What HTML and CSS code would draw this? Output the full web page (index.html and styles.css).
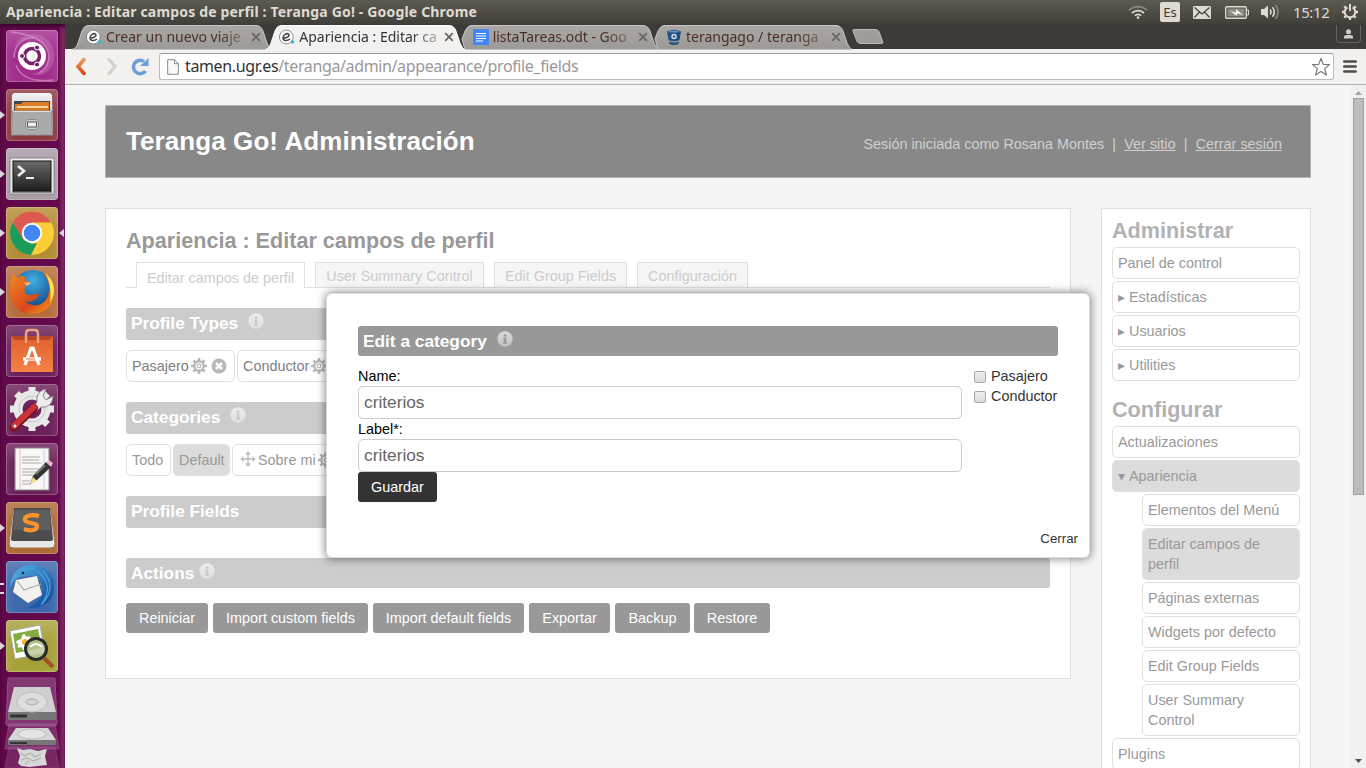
FILE: index.html
```html
<!DOCTYPE html>
<html lang="es">
<head>
<meta charset="utf-8">
<title>Apariencia : Editar campos de perfil : Teranga Go!</title>
<link rel="stylesheet" href="styles.css">
</head>
<body>
<svg class="defs" width="0" height="0">
  <defs>
    <linearGradient id="metal" x1="0" y1="0" x2="0" y2="1"><stop offset="0" stop-color="#f4f4f4"/><stop offset="1" stop-color="#a9a9a9"/></linearGradient>
    <linearGradient id="dark" x1="0" y1="0" x2="0" y2="1"><stop offset="0" stop-color="#6a6a6a"/><stop offset="1" stop-color="#1e1e1e"/></linearGradient>
    <linearGradient id="bag" x1="0" y1="0" x2="0" y2="1"><stop offset="0" stop-color="#e0602c"/><stop offset="1" stop-color="#f58247"/></linearGradient>
    <linearGradient id="info" x1="0" y1="0" x2="0" y2="1"><stop offset="0" stop-color="#dcdcdc"/><stop offset="1" stop-color="#c0c0c0"/></linearGradient>
    <linearGradient id="infopale" x1="0" y1="0" x2="0" y2="1"><stop offset="0" stop-color="#ededed"/><stop offset="1" stop-color="#dfdfdf"/></linearGradient>
    <linearGradient id="tabfill" x1="0" y1="0" x2="0" y2="1"><stop offset="0" stop-color="#aaa8a5"/><stop offset="1" stop-color="#9b9a97"/></linearGradient>
    <radialGradient id="globe" cx=".5" cy=".25" r=".7"><stop offset="0" stop-color="#3eb0e4"/><stop offset="1" stop-color="#123f7e"/></radialGradient>
    <linearGradient id="fox" x1="0" y1="0" x2="1" y2="1"><stop offset="0" stop-color="#f08a24"/><stop offset=".6" stop-color="#d9481c"/><stop offset="1" stop-color="#f6a21c"/></linearGradient>
    <linearGradient id="bird" x1="0" y1="0" x2="1" y2="1"><stop offset="0" stop-color="#58b4ec"/><stop offset="1" stop-color="#0b3f92"/></linearGradient>
    <linearGradient id="back" x1="0" y1="0" x2="0" y2="1"><stop offset="0" stop-color="#ef9a5a"/><stop offset="1" stop-color="#d8481a"/></linearGradient>
    <symbol id="i-info" viewBox="0 0 16 16"><circle cx="8" cy="8" r="7.700" fill="url(#info)"/><path d="M6.800 3.500h2.600v2H6.800zM6.300 6.600h3v5h.8v1.200H6v-1.200h.8V7.800h-.5z" fill="#999"/></symbol>
    <symbol id="i-info-pale" viewBox="0 0 16 16"><circle cx="8" cy="8" r="7.700" fill="url(#infopale)"/><path d="M6.800 3.500h2.600v2H6.800zM6.300 6.600h3v5h.8v1.200H6v-1.200h.8V7.800h-.5z" fill="#c8c8c8"/></symbol>
    <symbol id="i-gear" viewBox="0 0 16 16"><g stroke="#b8b8b8" fill="none"><circle cx="8" cy="8" r="4.700" stroke-width="2.400"/><path d="M8 0v3M8 13v3M0 8h3M13 8h3M2.400 2.400l2 2M11.600 11.600l2 2M2.400 13.600l2-2M11.600 4.400l2-2" stroke-width="2.600"/><circle cx="8" cy="8" r="1.800" stroke-width="1.200"/></g></symbol>
    <symbol id="i-del" viewBox="0 0 16 16"><circle cx="8" cy="8" r="7.500" fill="#b8b8b8"/><path d="M5 5l6 6M11 5l-6 6" stroke="#fff" stroke-width="2.600"/></symbol>
    <symbol id="i-move" viewBox="0 0 16 16"><path d="M8 2v12M2 8h12" stroke="#bbb" stroke-width="1.300"/><path d="M5 3.500L8 .3l3 3.200zM5 12.500l3 3.200 3-3.200zM3.500 5L.3 8l3.200 3zM12.500 5l3.200 3-3.200 3z" fill="#bbb"/></symbol>
    <symbol id="i-x" viewBox="0 0 10 10"><path d="M1.200 1.200l7.600 7.600M8.800 1.200L1.200 8.800" stroke="#6b6360" stroke-width="1.700"/></symbol>
    <symbol id="i-elgg" viewBox="0 0 16 16"><circle cx="7.300" cy="8" r="6.900" fill="#fafafa" stroke="#777" stroke-width=".8"/><path d="M4.300 8.900C8 9 11 7 9.600 5.200 8 3.600 4 6 4 9c.2 3 4 3.400 7 1" fill="none" stroke="#444" stroke-width="1.500"/><circle cx="13.500" cy="13" r="1.700" fill="#35b6dc"/></symbol>
  </defs>
</svg>
<div class="desktop">
  <header class="topbar">
    <span class="window-title">Apariencia : Editar campos de perfil : Teranga Go! - Google Chrome</span>
    <div class="tray">
      <svg class="wifi" width="20" height="14" viewBox="0 0 20 14" fill="none" stroke-width="1.700"><path d="M1 5.200a13 13 0 0 1 18 0" stroke="#8b887f"/><path d="M4 8a9 9 0 0 1 12 0M6.800 10.600a5 5 0 0 1 6.400 0" stroke="#dfdbd2"/><circle cx="10" cy="12.600" r="1.300" fill="#dfdbd2"/></svg>
      <span class="lang">Es</span>
      <svg class="mail" width="18" height="13" viewBox="0 0 18 13"><rect width="18" height="13" rx="1" fill="#dfdbd2"/><path d="M1.500 1.500L9 8l7.500-6.500M1.500 11.500L6.500 6M16.500 11.500l-5-5.500" fill="none" stroke="#44433d" stroke-width="1.200"/></svg>
      <svg class="battery" width="24" height="13" viewBox="0 0 24 13"><rect x=".7" y=".7" width="20.600" height="11.600" rx="1" fill="none" stroke="#dfdbd2" stroke-width="1.400"/><rect x="2.500" y="2.500" width="17" height="8" fill="#8f8c83"/><path d="M22 4h1.500v5H22" stroke="#dfdbd2" fill="none"/><path d="M5 5l6 1.600V3l7 6-6-1.500V10z" fill="#f4f1e9"/></svg>
      <svg class="sound" width="20" height="16" viewBox="0 0 20 16"><path d="M0 5h3l4-3.500v13L3 11H0z" fill="#dfdbd2"/><g fill="none" stroke-width="1.600"><path d="M9 5.500a4 4 0 0 1 0 5M11.500 3.300a7 7 0 0 1 0 9.400" stroke="#dfdbd2"/><path d="M14.500 1a11 11 0 0 1 0 14" stroke="#8b887f"/></g></svg>
      <span class="clock">15:12</span>
      <svg class="cog" width="18" height="18" viewBox="0 0 18 18" fill="none" stroke="#dfdbd2"><path d="M6.500 4.300a5.300 5.300 0 1 0 5 0" stroke-width="2"/><path d="M9 1v7" stroke-width="2"/><path d="M9 14v3M1 9h3M14 9h3M3.300 3.300l1.800 1.800M14.700 3.300l-1.800 1.800M3.300 14.700l1.800-1.800M14.700 14.700l-1.800-1.800" stroke-width="2.300"/></svg>
    </div>
  </header>
  <div class="workspace">
    <nav class="launcher">
      <div class="tile dash"><svg viewBox="0 0 52 52"><g fill="none" stroke="#dca6d2" opacity=".6"><path d="M5 2c14 2 32 5 37 19 3 10-2 18-9 22M8 28C8 13 18 7 28 8M47 50C30 52 15 49 10 35" stroke-width="1.500"/></g><path d="M6 20C13 3 36 6 42 20c4 11-5 24-17 24 15 5 27-8 22-26C40 0 15-2 6 20z" fill="#d68fcb" opacity=".35"/><circle cx="26" cy="26" r="14" fill="#fff"/><circle cx="26" cy="26" r="7.500" fill="none" stroke="#74206a" stroke-width="3.500"/><g fill="#74206a" stroke="#fff" stroke-width="1"><circle cx="16" cy="26" r="2.500"/><circle cx="31" cy="17.500" r="2.500"/><circle cx="31" cy="34.500" r="2.500"/></g></svg></div>
      <div class="tile files run"><svg viewBox="0 0 52 52"><path d="M6 6q1-2 3-2h34q2 0 3 2l1 37H5z" fill="url(#metal)"/><path d="M8 12h36v12H8z" fill="#464646"/><path d="M9 15h6l2-2h26v9H9z" fill="#dc7d29"/><path d="M11 17h31v5H11z" fill="#f4d5a4"/><path d="M9 19h34v4H9z" fill="#d6791f"/><path d="M6.500 22h39l1 24h-41z" fill="#aaa" stroke="#919191"/><path d="M7 22.500h38" stroke="#ddd"/><rect x="19.500" y="30.500" width="13" height="10" rx="3" fill="#ccc" stroke="#888"/><rect x="21.500" y="33" width="9" height="5" fill="#eee" stroke="#555"/></svg></div>
      <div class="tile term run"><svg viewBox="0 0 52 52"><path d="M4 10h44v36H4z" fill="#eee" stroke="#888"/><path d="M6 44h40" stroke="#888" stroke-width="2"/><rect x="7" y="13" width="38" height="30" fill="url(#dark)" stroke="#111"/><path d="M12 18l6 5-6 5" fill="none" stroke="#eee" stroke-width="2.600"/><path d="M20 30h8" stroke="#eee" stroke-width="2"/></svg></div>
      <div class="tile chrome run active"><svg viewBox="0 0 52 52"><circle cx="26" cy="26" r="22" fill="#fbce38"/><path d="M6.700 15.500A22 22 0 0 1 45 15.500H26L16 32z" fill="#dc5a50"/><path d="M6.700 15.500L17 32l9 5 5-1-6 12A22 22 0 0 1 6.700 15.500z" fill="#1c9b5b"/><circle cx="26" cy="26" r="10.200" fill="#fff"/><circle cx="26" cy="26" r="8.300" fill="#4285f4"/></svg></div>
      <div class="tile firefox run"><svg viewBox="0 0 52 52"><circle cx="27" cy="25" r="21" fill="url(#globe)"/><path d="M5 15c0-4 2-6 3-8l2 5c3-2 7-3 9-1l0 4 5 0-3 4c-4 3-3 9 2 10 4 1 7-3 10-1-2 6-8 9-14 7 8 8 20 4 23-5 3-10 0-18-6-24 8 4 13 11 12 22C47 41 37 48 26 48 12 48 3 37 4 24c0-3 0-6 1-9z" fill="url(#fox)"/><path d="M39 7c8 6 11 15 8 24l-3 6c1-8 1-20-5-30z" fill="#ffe245"/><path d="M18 17c2-1 5-1 7 0l-4 3z" fill="#f7bb80"/></svg></div>
      <div class="tile store"><svg viewBox="0 0 52 52"><path d="M5 11h42v36H5z" fill="url(#bag)"/><path d="M5 11h42l-4 4H9z" fill="#b94625"/><path d="M20 18V9q0-4 3-4h6q3 0 3 4v9" fill="none" stroke="#eba184" stroke-width="2.500"/><path d="M19 40l6-17h2l6 17" fill="none" stroke="#fff" stroke-width="3.200"/><path d="M17 34h18" stroke="#fff" stroke-width="3.400"/><path d="M20 34h9" stroke="#f17439"/></svg></div>
      <div class="tile settings"><svg viewBox="0 0 52 52"><g fill="none" stroke="#e8e8e8"><circle cx="26" cy="25" r="14" stroke-width="9"/><path d="M26 3v8M26 39v8M4 25h8M40 25h8M10.500 9.500l6 6M35.500 34.500l6 6M10.500 40.500l6-6M35.500 15.500l6-6" stroke-width="7"/></g><circle cx="26" cy="25" r="13" fill="none" stroke="#c8c8c8"/><path d="M31 18c-1-7 3-12 9-13l-3 7 3 4 7-4c0 8-6 12-12 11l-4 4-4-4z" fill="#eee" stroke="#888"/><path d="M8 43l20-19" stroke="#7c1018" stroke-width="8" stroke-linecap="round"/><path d="M8 42l20-19" stroke="#c9333a" stroke-width="6" stroke-linecap="round"/><circle cx="9" cy="42" r="1.500" fill="#fff"/></svg></div>
      <div class="tile editor"><svg viewBox="0 0 52 52"><path d="M9 5h34v42H9z" fill="#f7f7f5" stroke="#888"/><path d="M14 6v40" stroke="#f3bcbc"/><path d="M38 6v40" stroke="#c4d0ef"/><path d="M16 14h18M16 17h17M16 20h19M16 26h18M16 29h17M16 32h12M16 38h8M16 41h9" stroke="#aaa"/><path d="M24 41l3-8 13-14 5 5-14 13z" fill="#333"/><path d="M40 19l3-2 4 3-2 4z" fill="#efb1cc"/><path d="M24 41l3-7 4 4z" fill="#f5d98f"/><path d="M30 31l9-9" stroke="#777" stroke-width="2"/></svg></div>
      <div class="tile sublime run"><svg viewBox="0 0 52 52"><path d="M7 8h38l4 34q0 4-4 4H7q-4 0-4-4z" fill="#e8e8e8" stroke="#a46f49"/><path d="M8 6h36l3 31q0 2-3 2H8q-3 0-3-2z" fill="#4c4c4c"/><path d="M9 8h34l2 20H7z" fill="#6d6d6d" opacity=".6"/><path d="M33 14c-8-2-15 0-14 4 1 4 13 2 12 7-1 4-8 4-13 2" fill="none" stroke="#ff942d" stroke-width="4.200"/></svg></div>
      <div class="tile mailer run two"><svg viewBox="0 0 52 52"><path d="M4 27C4 10 17 3 27 4c12 0 21 9 21 22 0 15-13 23-29 21 12-4 19-11 18-21-2-8-9-12-17-11-6 0-12 2-16 12z" fill="url(#bird)"/><path d="M10 19L31 15l5 19-14 8L7 31z" fill="#f2f1ed"/><path d="M11 20l7 9 17-6" fill="none" stroke="#aaa" stroke-width="1.200"/><path d="M31 10c12 9 14 21 4 34M37 10c10 10 9 23-1 33M14 11c5-4 9-4 13-3" fill="none" stroke="#4ca0dc" stroke-width="1.200"/><circle cx="17" cy="12" r="1.300" fill="#123"/></svg></div>
      <div class="tile viewer run"><svg viewBox="0 0 52 52"><path d="M4 11l30-6 5 28-30 6z" fill="#fff" stroke="#aaa"/><path d="M7 14l25-5 4 19-26 5z" fill="#86ab42"/><g fill="#fff"><ellipse cx="18" cy="22" rx="8" ry="3"/><ellipse cx="18" cy="22" rx="3" ry="8"/><ellipse cx="18" cy="22" rx="3" ry="8" transform="rotate(50 18 22)"/></g><circle cx="19" cy="22" r="3" fill="#f0b626"/><circle cx="30" cy="29" r="10.500" fill="#b9c795" fill-opacity=".8" stroke="#292b29" stroke-width="3"/><path d="M24 27q6-6 12 0" stroke="#fff" stroke-width="2" fill="none"/><path d="M38 38l9 9" stroke="#9a5427" stroke-width="4"/></svg></div>
      <div class="stack">
        <svg viewBox="0 0 56 92"><path d="M4 1h47l2 45q0 3-3 3H5q-3 0-3-3z" fill="#a36598" opacity=".5" stroke="#c29abb"/><path d="M10 10h36l6 25v5H4v-5z" fill="#d0d0d0"/><path d="M4 35h48v7q0 1-2 1H6q-2 0-2-1z" fill="#777"/><path d="M6 39h17" stroke="#333" stroke-width="3"/><ellipse cx="28" cy="25" rx="15" ry="10" fill="#dedede" stroke="#bbb"/><ellipse cx="28" cy="25" rx="6" ry="3" fill="#d2d2d2" stroke="#aaa"/><path d="M5 47h46l4 25H1z" fill="#a36598" opacity=".4" stroke="#c29abb"/><path d="M12 51h32l8 12v4H4v-4z" fill="#d6d6d6"/><path d="M4 63h48v5H4z" fill="#777"/><path d="M6 66h17" stroke="#333" stroke-width="2"/><ellipse cx="28" cy="57" rx="14" ry="5" fill="#e4e4e4" stroke="#bbb"/><path d="M5 70h46l4 21H1z" fill="#a36598" opacity=".3" stroke="#c29abb"/><path d="M13 71l6 2 7-1 8 2 9-2-2 7 2 9-9 1-8 1-9-1-3-3 2-7z" fill="#d8d8d8"/><path d="M16 76l5 3 5-3 5 4 6-3M17 83l6-2 6 3 8-3M21 87l4-3" fill="none" stroke="#b0b0b0" stroke-width="1.200"/></svg>
      </div>
    </nav>
    <section class="browser">
      <div class="tabstrip">
        <div class="tab"><svg class="shape" viewBox="0 0 200 25"><path d="M0 24.500C4 23 5 21 6 18L10 6Q12 .5 16 .5H184Q189 .5 191 6L195 18Q197 23 200 24.500" fill="url(#tabfill)" stroke="#c9c7c4"/></svg><svg class="fav"><use href="#i-elgg"/></svg><span class="tab-label">Crear un nuevo viaje</span><svg class="close"><use href="#i-x"/></svg></div>
        <div class="tab current"><svg class="shape" viewBox="0 0 200 25"><path d="M0 25C4 23 5 21 6 18L10 6Q12 .5 16 .5H184Q189 .5 191 6L195 18Q197 23 200 25" fill="#f2f1f0" stroke="#fff"/></svg><svg class="fav"><use href="#i-elgg"/></svg><span class="tab-label">Apariencia : Editar ca</span><svg class="close"><use href="#i-x"/></svg></div>
        <div class="tab"><svg class="shape" viewBox="0 0 200 25"><path d="M6 24.500L3 14 6 6Q9 .5 12 .5H184Q189 .5 191 6L195 18Q197 23 200 24.500" fill="url(#tabfill)" stroke="#c9c7c4"/></svg><svg class="fav" viewBox="0 0 16 16"><rect width="16" height="16" rx="1" fill="#4285f4"/><path d="M3 4.500h10M3 7h10M3 9.500h10M3 12h7" stroke="#fff" stroke-width="1.200"/></svg><span class="tab-label">listaTareas.odt - Goo</span><svg class="close"><use href="#i-x"/></svg></div>
        <div class="tab"><svg class="shape" viewBox="0 0 200 25"><path d="M6 24.500L3 14 6 6Q9 .5 12 .5H184Q189 .5 191 6L195 18Q197 23 200 24.500" fill="url(#tabfill)" stroke="#c9c7c4"/></svg><svg class="fav" viewBox="0 0 16 16"><path d="M1 2.500Q8-1 15 2.500L13.500 11Q8 13.500 2.500 11z" fill="#205081"/><ellipse cx="8" cy="2.500" rx="5" ry="1" fill="#6894bd"/><path d="M3 12.500q5 2 10 0l-.6 2.500q-4.500 2-8.800 0z" fill="#205081"/><circle cx="8" cy="7.500" r="2" fill="#205081" stroke="#dde" stroke-width="1.500"/></svg><span class="tab-label">terangago / teranga</span><svg class="close"><use href="#i-x"/></svg></div>
        <svg class="newtab" width="32" height="15" viewBox="0 0 32 15"><path d="M1 2Q0 .5 3 .5H23q3 0 4 2l4 11q0 1-2 1H9q-3 0-4-2z" fill="#9e9d9a" stroke="#bbb9b6"/></svg>
        <div class="profile"><svg width="11" height="10" viewBox="0 0 11 10"><circle cx="5.500" cy="2.800" r="2.500" fill="#d0cec8"/><path d="M1 9.500V8q0-2 3-2h3q3 0 3 2v1.500z" fill="#d0cec8"/></svg></div>
      </div>
      <div class="toolbar">
        <svg class="nav-back" width="12" height="19" viewBox="0 0 12 19"><path d="M9 2.500L3 9.500 9 16.500" fill="none" stroke="url(#back)" stroke-width="3.600" stroke-linecap="round"/></svg>
        <svg class="nav-fwd" width="12" height="19" viewBox="0 0 12 19"><path d="M3 2.500l6 7-6 7" fill="none" stroke="#d3d1ce" stroke-width="3.200" stroke-linecap="round"/></svg>
        <svg class="nav-reload" width="18" height="19" viewBox="0 0 18 19"><path d="M14.500 14A6.700 6.700 0 1 1 13 4.500" fill="none" stroke="#6ba1d6" stroke-width="3.600"/><path d="M17.500 1v8H9z" fill="#6ba1d6"/></svg>
        <div class="omnibox">
          <svg width="12" height="16" viewBox="0 0 12 16"><path d="M.7.700h6.800l3.800 4v10.600H.7zM7.500.7v4h3.800" fill="#fafafa" stroke="#888"/></svg>
          <span class="url"><b>tamen.ugr.es</b>/teranga/admin/appearance/profile_fields</span>
          <svg class="star" width="20" height="20" viewBox="0 0 20 20"><path d="M10 1.500l2.300 5.900 6.200.2-4.900 4 1.900 6.300L10 14.500l-5.500 3.400 1.900-6.300-4.900-4 6.200-.2z" fill="#fff" stroke="#777" stroke-width="1.200" stroke-linejoin="round"/></svg>
        </div>
        <svg class="menu" width="14" height="13" viewBox="0 0 14 13"><path d="M1.300 1.500h11.400M1.300 6.500h11.400M1.300 11.500h11.400" stroke="#4d4c4a" stroke-width="2.600" stroke-linecap="round"/></svg>
      </div>
      <div class="viewport">
        <div class="page">
          <div class="site-header">
            <h1>Teranga Go! Administración</h1>
            <p class="session"><span class="who">Sesión iniciada como Rosana Montes</span><i>|</i><a>Ver sitio</a><i>|</i><a>Cerrar sesión</a></p>
          </div>
          <div class="columns">
            <main class="panel">
              <h2>Apariencia : Editar campos de perfil</h2>
              <ul class="filters"><li class="w1 selected">Editar campos de perfil</li><li class="w2">User Summary Control</li><li class="w3">Edit Group Fields</li><li class="w4">Configuración</li></ul>
              <h3 class="bar first">Profile Types <svg class="info far"><use href="#i-info-pale"/></svg></h3>
              <div class="chips types"><span class="chip c-pas">Pasajero<svg class="ic"><use href="#i-gear"/></svg><svg class="ic del"><use href="#i-del"/></svg></span><span class="chip c-con">Conductor<svg class="ic"><use href="#i-gear"/></svg><svg class="ic del"><use href="#i-del"/></svg></span></div>
              <h3 class="bar">Categories <svg class="info far"><use href="#i-info-pale"/></svg></h3>
              <div class="chips"><span class="chip c-todo">Todo</span><span class="chip c-def on">Default</span><span class="chip c-sob"><svg class="ic move"><use href="#i-move"/></svg>Sobre mi<svg class="ic"><use href="#i-gear"/></svg></span></div>
              <h3 class="bar">Profile Fields</h3>
              <h3 class="bar actions">Actions <svg class="info"><use href="#i-info-pale"/></svg></h3>
              <div class="buttons"><span class="b1">Reiniciar</span><span class="b2">Import custom fields</span><span class="b3">Import default fields</span><span class="b4">Exportar</span><span class="b5">Backup</span><span class="b6">Restore</span></div>
            </main>
            <aside class="sidebar">
              <h2>Administrar</h2>
              <ul><li>Panel de control</li><li><i>▸</i>Estadísticas</li><li><i>▸</i>Usuarios</li><li><i>▸</i>Utilities</li></ul>
              <h2>Configurar</h2>
              <ul><li>Actualizaciones</li><li class="on"><i>▾</i>Apariencia</li></ul>
              <ul class="sub"><li>Elementos del Menú</li><li class="on">Editar campos de<br>perfil</li><li>Páginas externas</li><li>Widgets por defecto</li><li>Edit Group Fields</li><li>User Summary<br>Control</li></ul>
              <ul><li>Plugins</li></ul>
            </aside>
          </div>
          <div class="modal">
            <h3>Edit a category <svg class="info far"><use href="#i-info"/></svg></h3>
            <div class="form">
              <div class="fields"><label>Name:</label><div class="input">criterios</div><label>Label*:</label><div class="input">criterios</div><span class="save">Guardar</span></div>
              <div class="checks"><label><span class="box"></span>Pasajero</label><label><span class="box"></span>Conductor</label></div>
            </div>
            <span class="dismiss">Cerrar</span>
          </div>
        </div>
        <div class="scrollbar"><svg width="7" height="4" viewBox="0 0 7 4"><path d="M0 4L3.500 0 7 4z" fill="#a3a3a3"/></svg><div class="thumb"></div><svg width="7" height="4" viewBox="0 0 7 4"><path d="M0 0h7L3.500 4z" fill="#505050"/></svg></div>
      </div>
    </section>
  </div>
</div>
</body>
</html>
```
FILE: styles.css
```css
* { box-sizing: border-box; }
body { margin: 0; font-family: "Liberation Sans", Arial, sans-serif; font-size: 14.4px; line-height: 20px; }
h1, h2, h3, p, ul { margin: 0; padding: 0; }
ul { list-style: none; }
i { font-style: normal; }
svg { flex: none; display: block; }
.defs { position: absolute; }
.desktop { width: 1366px; height: 768px; overflow: hidden; display: flex; flex-direction: column; background: #3c3b37; }

/* system bar */
.topbar { height: 24px; flex: none; display: flex; align-items: center; justify-content: space-between; padding: 0 7px 0 6px; background: linear-gradient(#5c5a50, #403f3a); color: #dfdbd2; font-family: "Noto Sans", sans-serif; }
.window-title { font-weight: bold; font-size: 14px; white-space: nowrap; letter-spacing: .17px; }
.tray { display: flex; align-items: center; height: 24px; }
.lang { width: 20px; height: 20px; border-radius: 2px; background: #dfdbd2; color: #3c3b37; font-size: 13px; text-align: center; margin: 0 13px 0 12px; }
.battery { margin-left: 14px; }
.sound { margin-left: 12px; }
.clock { font-size: 15px; margin-left: 12px; width: 37px; letter-spacing: -.4px; white-space: nowrap; }
.cog { margin-left: 11px; }
.workspace { flex: 1; min-height: 0; display: flex; }

/* launcher */
.launcher { width: 65px; flex: none; padding: 6px 0 0 6px; background: linear-gradient(90deg, #600849, #650a4e 90%, #8b3a6e); display: flex; flex-direction: column; gap: 7px; box-shadow: inset 0 3px 3px #42052f; }
.tile { position: relative; width: 52px; height: 52px; flex: none; border-radius: 4px; box-shadow: inset 0 0 0 1px rgba(255,255,255,.22), inset 0 12px 14px rgba(255,255,255,.18); }
.tile > svg { width: 52px; height: 52px; }
.dash { background: #a12d8c; }
.files { background: #8d3941; }
.term { background: #a99aa6; }
.chrome { background: #b38d36; }
.firefox { background: #b56d3e; }
.store, .settings, .editor { background: #6b2059; }
.sublime { background: #ac6935; }
.mailer { background: #3e68ab; }
.viewer { background: #a7a13a; }
.run::before { content: ""; position: absolute; left: -6px; top: 22px; border: 4px solid transparent; border-left: 5px solid #dcd6da; border-right: 0; }
.two::before { top: 22px; width: 4px; height: 7px; border: solid #dcd6da; border-width: 2px 0; }
.active::after { content: ""; position: absolute; right: -6px; top: 22px; border: 4px solid transparent; border-right: 5px solid #dcd6da; border-left: 0; }
.stack { width: 56px; margin: -2px 0 0 -2px; }
.stack svg { width: 56px; height: 92px; }

/* browser frame */
.browser { flex: 1; min-width: 0; display: flex; flex-direction: column; }
.tabstrip { height: 25px; flex: none; display: flex; padding: 1px 0 0 7px; background: #3c3b37; }
.tab { position: relative; width: 200px; height: 24px; margin-right: -6.700px; flex: none; display: flex; align-items: center; padding: 0 11px 0 14px; color: #4a2f26; }
.current { z-index: 2; color: #333; }
.shape { position: absolute; left: 0; top: 0; width: 200px; height: 25px; }
.fav { position: relative; width: 16px; height: 16px; }
.tab-label { position: relative; margin-left: 4px; width: 140px; overflow: hidden; white-space: nowrap; font: 14px/22px "Noto Sans", sans-serif; -webkit-mask-image: linear-gradient(90deg, #000 112px, rgba(0,0,0,.3) 140px); }
.close { position: relative; width: 10px; height: 10px; margin-left: 6px; }
.newtab { margin: 4px 0 0 6.500px; }
.profile { margin: 0 5px 0 auto; width: 25px; height: 18px; border: 1px solid #65635d; border-top: 0; border-radius: 0 0 4px 4px; display: flex; justify-content: center; align-items: center; }
.toolbar { height: 36px; flex: none; display: flex; align-items: center; background: #f2f1f0; border-bottom: 1px solid #b1b0ae; padding: 0 9px 0 10px; }
.nav-fwd { margin-left: 19px; }
.nav-reload { margin-left: 13px; }
.omnibox { margin-left: 10px; width: 1175px; height: 27px; flex: none; border: 1px solid #bbb; border-top-color: #999; border-radius: 3px; background: #fff; display: flex; align-items: center; padding: 0 2px 0 7px; }
.url { flex: 1; margin: -2px 0 0 6px; color: #999; font: 16px/22px "Noto Sans", sans-serif; white-space: nowrap; letter-spacing: -.37px; }
.url b { font-weight: normal; color: #333; }
.menu { margin-left: 9px; }
.viewport { flex: 1; min-height: 0; display: flex; background: #f5f5f5; }
.page { position: relative; width: 1286px; flex: none; overflow: hidden; padding: 20px 40px 0; }
.scrollbar { width: 15px; background: #f0f0f0; display: flex; flex-direction: column; align-items: center; padding: 6px 0 5px; }
.thumb { width: 11px; height: 397px; margin: 3px 0 auto; border: 1px solid #a0a0a0; background: #bcbcbc; }

/* admin page */
.site-header { width: 1206px; height: 73px; border: 1px solid #b4b4b4; background: #888; color: #fff; display: flex; justify-content: space-between; padding: 0 28px 0 20px; }
.site-header h1 { font-size: 26px; line-height: 70px; white-space: nowrap; letter-spacing: .08px; }
.session { line-height: 77px; color: #d0d0d0; white-space: nowrap; }
.session i { margin: 0 8.200px; }
.session a { text-decoration: underline; }
.columns { display: flex; margin-top: 30px; gap: 30px; width: 1206px; align-items: flex-start; }
.panel { width: 966px; height: 471px; border: 1px solid #e0e0e0; background: #fff; padding: 19px 20px; }
.panel h2, .sidebar h2 { font-size: 21.6px; line-height: 26px; white-space: nowrap; }
.panel h2 { color: #999; }
.filters { display: flex; gap: 10px; height: 26px; margin-top: 8px; padding-left: 10px; border-bottom: 1px solid #e0e0e0; color: #ccc; }
.filters li { border: 1px solid #e0e0e0; border-bottom: 0; background: #f6f6f6; height: 25px; line-height: 26px; text-align: center; white-space: nowrap; }
.filters .selected { background: #fff; height: 26px; line-height: 31px; }
.w1 { width: 169px; } .w2 { width: 169px; } .w3 { width: 133px; } .w4 { width: 111px; }
.bar { height: 32px; margin: 20px 0 0; border-radius: 3px; background: #ccc; color: #fff; font-size: 17.280px; line-height: 31px; padding-left: 5px; display: flex; }
.info { width: 16px; height: 16px; margin: 5px 0 0 5px; }
.info.far { margin-left: 10px; }
.bar.actions { height: 30px; line-height: 31px; margin-top: 30px; }
.chips { display: flex; gap: 2px; margin-top: 10px; color: #999; }
.types { color: #808080; }
.chip { height: 32px; border: 1px solid #e0e0e0; border-radius: 5px; padding-left: 5px; display: flex; align-items: center; background: #fff; white-space: nowrap; }
.chip .ic { width: 16px; height: 16px; margin-left: 2px; }
.chip .del { margin-left: 4.500px; }
.chip .move { margin: -3px 2px 0 2px; }
.on { background: #dcdcdc; }
.c-pas { width: 109px; } .c-con { width: 120px; } .c-todo { width: 45px; } .c-def { width: 57px; } .c-sob { width: 130px; }
.buttons { display: flex; gap: 5px; margin-top: 15px; }
.buttons span { height: 30px; line-height: 30px; border-radius: 3px; background: #999; color: #fff; text-align: center; white-space: nowrap; }
.b1 { width: 82px; } .b2 { width: 155px; } .b3 { width: 151px; } .b4 { width: 81px; } .b5 { width: 75px; } .b6 { width: 76px; }
.buttons .b5 { width: 75px; margin-right: -1px; }
.sidebar { width: 210px; height: 600px; border: 1px solid #e0e0e0; background: #fff; padding: 9px 10px; color: #999; }
.sidebar h2 { color: #b2b2b2; margin-bottom: 3px; }
.sidebar ul + h2 { margin-top: 16px; }
.sidebar li { border: 1px solid #e0e0e0; border-radius: 5px; padding: 5px; margin-bottom: 2px; white-space: nowrap; }
.sidebar li i { display: inline-block; width: 11px; font: 14px/18px "DejaVu Sans", sans-serif; }
.sub { margin-left: 30px; }

/* dialog */
.modal { position: absolute; left: 261px; top: 208px; width: 764px; height: 265px; background: #fff; border-radius: 6px; border: 1px solid #ddd; box-shadow: 0 0 9px 1px rgba(0,0,0,.45); padding: 32px 31px; color: #333; }
.modal h3 { height: 30px; background: #999; color: #fff; border-radius: 3px; font-size: 17.280px; line-height: 31px; padding-left: 5px; display: flex; }
.form { display: flex; margin-top: 10px; gap: 12px; }
.fields { width: 604px; display: flex; flex-direction: column; color: #000; }
.fields label { height: 20px; }
.input { height: 33px; border: 1px solid #ccc; border-radius: 5px; color: #666; font-size: 17.300px; line-height: 31px; padding-left: 5px; }
.save { width: 79px; height: 30px; border-radius: 3px; background: #333; color: #fff; line-height: 30px; text-align: center; }
.checks label { display: flex; height: 20px; }
.box { width: 12px; height: 12px; margin: 5px 5px 0 0; border: 1px solid #a8a8a8; border-radius: 2px; background: linear-gradient(#eee, #dcdcdc); }
.dismiss { position: absolute; right: 11px; bottom: 8px; font-size: 13.300px; }
```
